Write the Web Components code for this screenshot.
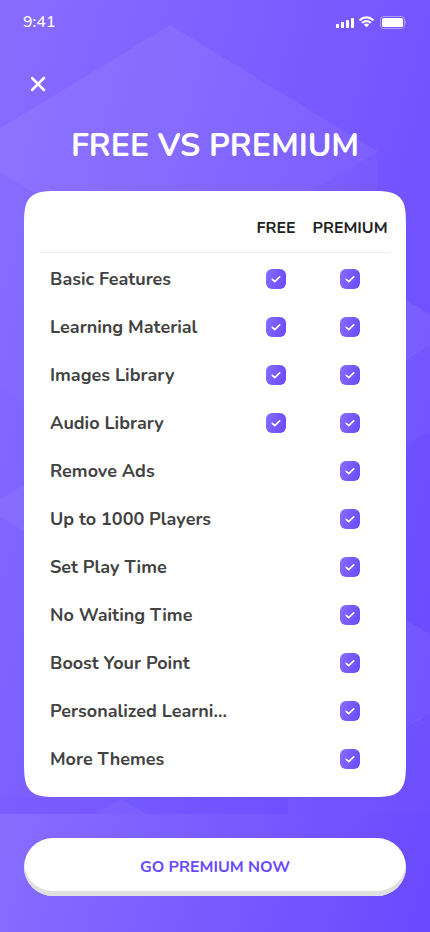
<!DOCTYPE html>
<html lang="en">
<head>
<meta charset="utf-8">
<meta name="viewport" content="width=device-width, initial-scale=1">
<title>Free vs Premium</title>
<style>
  :root {
    --primary: #6949ff;
    --fill: linear-gradient(106deg, #876dff 0%, #6949ff 100%);
    --ink: #212121;
    --ink-soft: #424242;
    --line: #eeeeee;
  }
  body {
    margin: 0;
    font-family: Nunito, "Open Sans", "Noto Sans", sans-serif;
    color: var(--ink);
    background: var(--primary);
  }
</style>
</head>
<body>
<premium-screen>
  <status-bar slot="status" time="9:41"></status-bar>
  <close-button slot="nav"></close-button>
  <span slot="title">FREE VS PREMIUM</span>
  <plan-table></plan-table>
  <action-button slot="action">GO PREMIUM NOW</action-button>
</premium-screen>

<script>
  const attach = (host, html) => {
    const template = document.createElement('template');
    template.innerHTML = html;
    const root = host.attachShadow({ mode: 'open' });
    root.append(template.content.cloneNode(true));
    return root;
  };

  customElements.define('premium-screen', class extends HTMLElement {
    constructor() {
      super();
      attach(this, `
        <style>
          :host { display: flex; flex-direction: column; min-height: 100vh; }
          .main { position: relative; flex: 1; background: var(--fill); padding-bottom: 17px; isolation: isolate; }
          header { display: flex; flex-direction: column; }
          h1 { margin: 0; padding: 12px 24px 25px; text-align: center; color: #fff; font-size: 32px; line-height: 40px; font-weight: 700; }
          .card { margin: 0 24px; }
          footer { background: var(--fill); padding: 24px 24px 36px; }
        </style>
        <main class="main">
          <cube-backdrop></cube-backdrop>
          <header><slot name="status"></slot><slot name="nav"></slot></header>
          <h1><slot name="title"></slot></h1>
          <div class="card"><slot></slot></div>
        </main>
        <footer><slot name="action"></slot></footer>`);
    }
  });

  customElements.define('cube-backdrop', class extends HTMLElement {
    constructor() {
      super();
      attach(this, `
        <style>
          :host { display: block; position: absolute; inset: 0; z-index: -1; overflow: hidden; }
          svg { display: block; width: 100%; height: 100%; }
        </style>
        <svg viewBox="0 0 430 814" preserveAspectRatio="xMidYMin slice" aria-hidden="true">
          <g fill="#fff">
            <path fill-opacity=".06" d="M170 25 377 151 170 272 -37 151Z"/>
            <path fill-opacity=".03" d="M377 151V390L170 510V272Z"/>
            <path fill-opacity=".015" d="M-37 151 170 272V510L-37 360Z"/>
            <path fill-opacity=".07" d="M406 300 450 326 450 334 406 359 300 359Z"/>
            <path fill-opacity=".04" d="M406 359 450 334V420L406 445H300V359Z"/>
            <path fill-opacity=".06" d="M406 620 450 646V702L406 727H300V620Z"/>
            <path fill-opacity=".03" d="M406 727 450 702V814H288V727Z"/>
            <path fill-opacity=".05" d="M-14 508 30 481V535Z"/>
            <path fill-opacity=".05" d="M121 799 147 814H95Z"/>
          </g>
          <path d="M0 797H81V814H0Z" fill="#6949ff" fill-opacity=".1"/>
          <path d="M81 797H288V814H81Z" fill="#6949ff" fill-opacity=".08"/>
          <path d="M377 151 300 197M430 345 406 359M430 713 406 727" fill="none" stroke="#fff" stroke-opacity=".06"/>
        </svg>`);
    }
  });

  customElements.define('status-bar', class extends HTMLElement {
    constructor() {
      super();
      const root = attach(this, `
        <style>
          :host { display: flex; align-items: center; justify-content: space-between; height: 44px; padding: 0 23px; color: #fff; font-size: 16px; line-height: 24px; font-weight: 500; }
          .icons { display: flex; align-items: center; gap: 4px; }
          svg { display: block; }
        </style>
        <time></time>
        <div class="icons">
          <svg width="18" height="12" viewBox="0 0 18 12" fill="#fff" aria-hidden="true">
            <rect x="0" y="8" width="3" height="4" rx=".7"/><rect x="5" y="6" width="3" height="6" rx=".7"/>
            <rect x="10" y="4" width="3" height="8" rx=".7"/><rect x="15" y="2" width="3" height="10" rx=".7"/>
          </svg>
          <svg width="17" height="12" viewBox="0 0 17 12" fill="#fff" aria-hidden="true">
            <path d="M8.5 2.6c2.3 0 4.4.9 6 2.4.1.1.3.1.4 0l1.2-1.2c.1-.1.1-.3 0-.4a11 11 0 0 0-15.200 0c-.1.1-.1.3 0 .4L2.100 5c.1.1.3.1.4 0a8.700 8.700 0 0 1 6-2.400Z"/>
            <path d="M8.5 6.300c1.200 0 2.400.5 3.300 1.300.1.1.3.1.4 0l1.200-1.200c.1-.1.1-.3 0-.4a7.200 7.200 0 0 0-9.800 0c-.1.1-.1.3 0 .4l1.200 1.200c.1.1.3.1.4 0 .9-.8 2.100-1.300 3.300-1.300Z"/>
            <path d="M10.900 8.900c.1-.1.1-.3 0-.4a3.700 3.700 0 0 0-4.800 0c-.1.1-.1.3 0 .4l2.200 2.200c.1.1.3.1.4 0Z"/>
          </svg>
          <svg width="28" height="14" viewBox="0 0 28 14" aria-hidden="true">
            <rect x="1.500" y="1.500" width="24" height="12" rx="3" fill="none" stroke="#fff" stroke-opacity=".4"/>
            <rect x="3" y="3" width="21" height="9" rx="1.600" fill="#fff"/>
            <path d="M26.300 5.500v4c.4-.4.700-1.100.700-2s-.3-1.600-.7-2Z" fill="#fff" fill-opacity=".5"/>
          </svg>
        </div>`);
      root.querySelector('time').textContent = this.getAttribute('time');
    }
  });

  customElements.define('close-button', class extends HTMLElement {
    constructor() {
      super();
      attach(this, `
        <style>
          :host { display: flex; padding: 26px 24px 16px; }
          button { width: 28px; height: 28px; padding: 0; border: 0; background: none; display: grid; place-items: center; cursor: pointer; }
          svg { display: block; }
        </style>
        <button type="button" aria-label="Close">
          <svg width="28" height="28" viewBox="0 0 28 28" fill="none" stroke="#fff" stroke-width="2.500" stroke-linecap="round" aria-hidden="true"><path d="M8 8 20 20M20 8 8 20"/></svg>
        </button>`);
    }
  });

  customElements.define('plan-check', class extends HTMLElement {
    constructor() {
      super();
      const root = attach(this, `
        <style>
          :host { display: inline-grid; width: 20px; height: 20px; vertical-align: middle; }
          input, svg { grid-area: 1 / 1; width: 20px; height: 20px; margin: 0; }
          input { appearance: none; border-radius: 6px; background: var(--fill); pointer-events: none; }
          svg { pointer-events: none; position: relative; }
        </style>
        <input type="checkbox" checked>
        <svg viewBox="0 0 20 20" fill="none" stroke="#fff" stroke-width="1.700" stroke-linecap="round" stroke-linejoin="round" aria-hidden="true"><path d="M6.300 10.300 8.700 12.600 13.700 7.900"/></svg>`);
      root.querySelector('input').setAttribute('aria-label', this.getAttribute('label'));
    }
  });

  customElements.define('plan-table', class extends HTMLElement {
    constructor() {
      super();
      const rows = [
        ['Basic Features', true], ['Learning Material', true], ['Images Library', true],
        ['Audio Library', true], ['Remove Ads', false], ['Up to 1000 Players', false],
        ['Set Play Time', false], ['No Waiting Time', false], ['Boost Your Point', false],
        ['Personalized Learni...', false], ['More Themes', false]
      ];
      attach(this, `
        <style>
          :host { display: block; padding: 12px 16px 14px; border-radius: 26px; background: #fff; }
          @supports (corner-shape: squircle) {
            :host { border-radius: 40px; corner-shape: squircle; }
          }
          table { width: 100%; border-collapse: separate; border-spacing: 0; table-layout: fixed; }
          .free { width: 68px; }
          .premium { width: 80px; }
          th, td { padding: 0; text-align: center; vertical-align: middle; }
          thead th, thead td { height: 49px; border-bottom: 1px solid var(--line); font-size: 16px; line-height: 24px; font-weight: 700; }
          tbody::before { content: ""; display: table-row; height: 2px; }
          tbody th { height: 48px; padding-left: 10px; text-align: left; color: var(--ink-soft); font-size: 18px; line-height: 24px; font-weight: 700; white-space: nowrap; }
          td { font-size: 0; }
        </style>
        <table>
          <colgroup><col><col class="free"><col class="premium"></colgroup>
          <thead><tr><td></td><th scope="col">FREE</th><th scope="col">PREMIUM</th></tr></thead>
          <tbody>${rows.map(([name, free]) => `
            <tr><th scope="row">${name}</th>
              <td>${free ? `<plan-check label="${name}, free"></plan-check>` : ''}</td>
              <td><plan-check label="${name}, premium"></plan-check></td></tr>`).join('')}
          </tbody>
        </table>`);
    }
  });

  customElements.define('action-button', class extends HTMLElement {
    constructor() {
      super();
      attach(this, `
        <style>
          :host { display: block; }
          button { display: block; width: 100%; height: 58px; padding: 0 16px; border: 0; border-radius: 29px; background: #fff; box-shadow: inset 0 -5px #e0e0e0; color: var(--primary); font: 700 16px/24px Nunito, "Open Sans", "Noto Sans", sans-serif; cursor: pointer; }
        </style>
        <button type="button"><slot></slot></button>`);
    }
  });
</script>
</body>
</html>
